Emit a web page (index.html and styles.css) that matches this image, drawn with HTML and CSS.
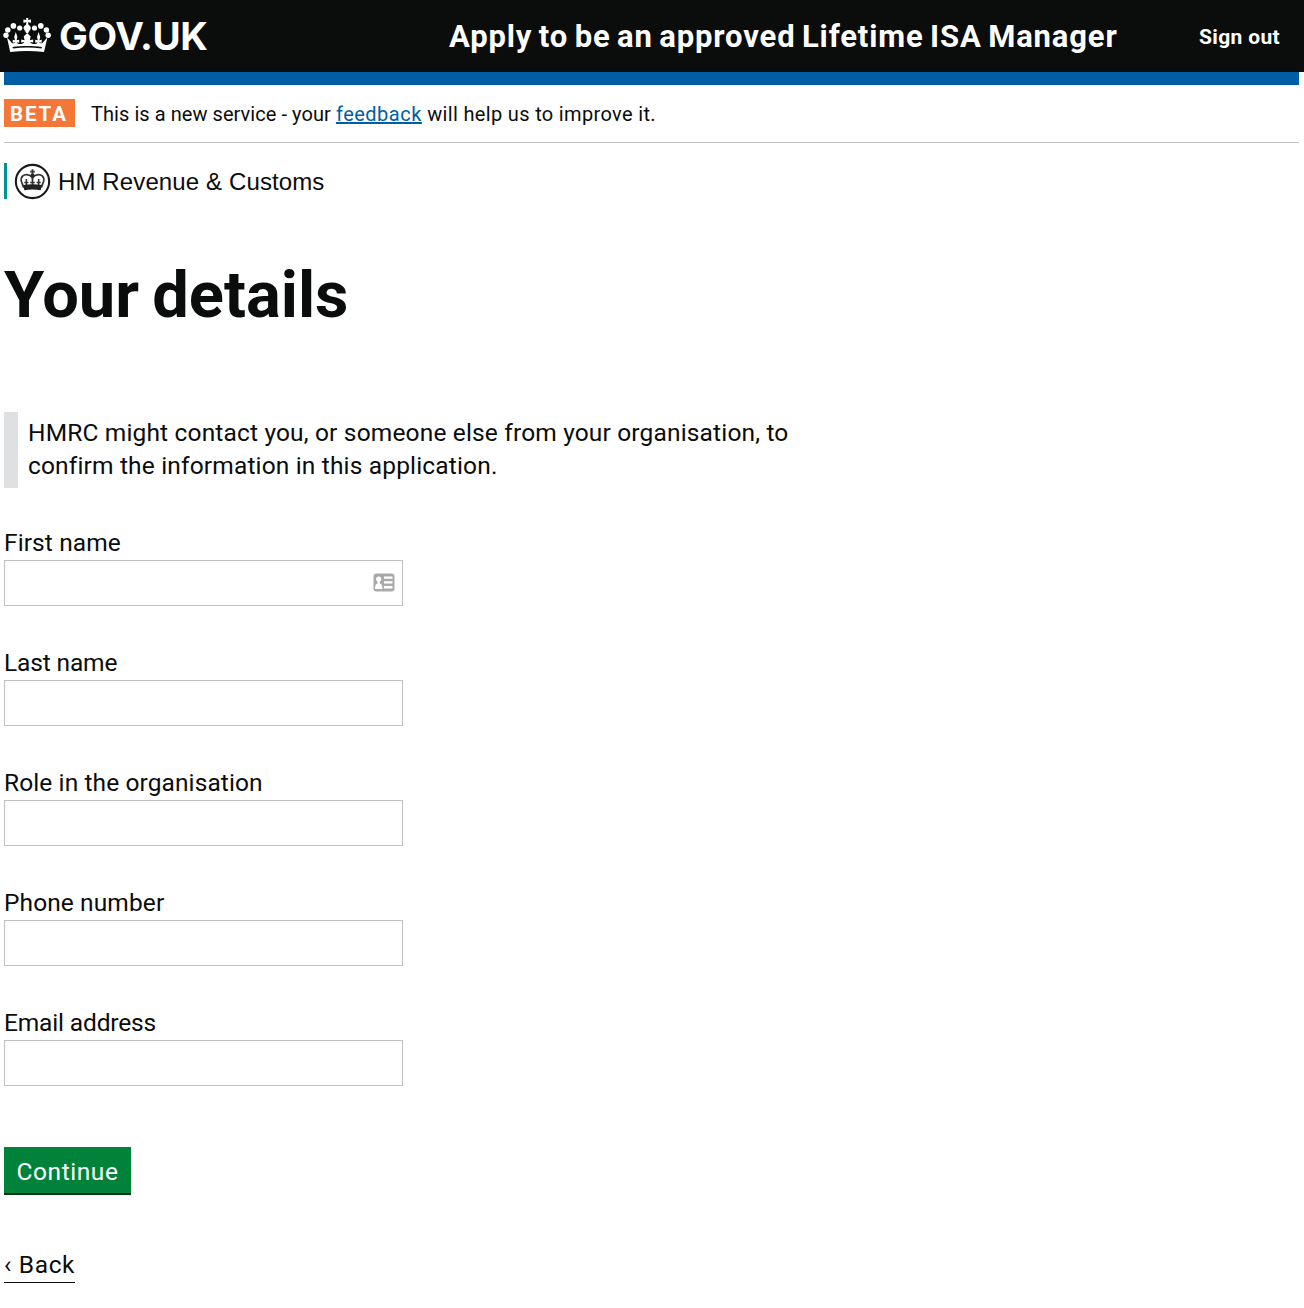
FILE: index.html
```html
<!DOCTYPE html>
<html lang="en">
<head>
<meta charset="utf-8">
<title>Your details</title>
<link rel="stylesheet" href="styles.css">
</head>
<body>
<header class="header">
  <a class="logo" href="#">
    <svg class="logo-crown" viewBox="0 0 48 36" fill="#fff">
      <circle cx="3" cy="17.300" r="2.700"/><circle cx="4.800" cy="12" r="2.700"/><circle cx="10.400" cy="7.900" r="2.800"/><circle cx="16.700" cy="10" r="2.600"/>
      <circle cx="45.200" cy="17.300" r="2.700"/><circle cx="43.400" cy="12" r="2.700"/><circle cx="37.800" cy="7.900" r="2.800"/><circle cx="31.500" cy="10" r="2.600"/>
      <path d="M22.800-.5h2.800L25 2l3-.5v3.300l-3-.5.5 2.700c1.500.5 2.300 1.800 2.300 3.500l-2.600 4.500h-2l-2.600-4.500c0-1.700.8-3 2.300-3.500l.5-2.700-3 .5V1.500l3 .5z"/>
      <path fill-rule="evenodd" d="M4 19.500l4 4.300c.8 2 3.700 2 4.200.4l-2.500.5v-3l2.300.6-.8-3.200L12.800 14l1.600 5.100-.8 3.200 2.600-.6v3l-2.500-.5c.7 2.600 6.700 2.400 7.500-.2l-3 .6v-3.200l3.400.8-.9-3.700 3.500-3.500 3.500 3.500-.9 3.700 3.400-.8v3.200l-3-.6c.8 2.600 6.800 2.800 7.500.2l-2.500.5v-3l2.600.6-.8-3.200L35.600 14l1.600 5.100-.8 3.200 2.300-.6v3l-2.500-.5c.5 1.600 3.400 1.600 4.200-.4l4-4.300L41 34c-11-1.500-22.800-1.500-33.800 0zM9.500 29l.5 1.500c9-1.200 19.400-1.200 28.400 0l.5-1.500c-9-1.300-20.400-1.300-29.400 0z"/>
    </svg>
    <span class="logo-text">GOV.UK</span>
  </a>
  <span class="service-name">Apply to be an approved Lifetime ISA Manager</span>
  <a class="sign-out" href="#">Sign out</a>
</header>
<main class="page">
  <div class="phase-banner">
    <strong class="phase-tag">BETA</strong>
    <span class="phase-text"><span class="phase-lead">This is a new service - your </span><a class="feedback" href="#">feedback</a> will help us to improve it.</span>
  </div>
  <div class="organisation">
    <svg class="crest" viewBox="0 0 36 36" fill="#222">
      <circle cx="18" cy="18" r="16.200" fill="#fff" stroke="#1a1a1a" stroke-width="2"/>
      <path d="M9.500 24L7.200 18C6 13 10 10.500 13.500 11.500c2.500.5 4.500 2 4.500 4.500 0-2.500 2-4 4.500-4.500 3.500-1 7.500 1.500 6.300 6.500l-2.300 6M18 6v17M15.800 8.500h4.400" fill="none" stroke="#333" stroke-width="1.700"/>
      <circle cx="18" cy="12" r="1.800"/>
      <path d="M12 15.500v7M24 15.500v7M10 19h4M22 19h4M15.800 19h4.400" fill="none" stroke="#333" stroke-width="1.500"/>
      <path d="M9 21.500c6-1 12-1 18 0l-1 5c-5-1-11-1-16 0z"/>
    </svg>
    <span class="organisation-name">HM Revenue &amp; Customs</span>
  </div>
  <h1 class="title">Your details</h1>
  <p class="inset">HMRC might contact you, or someone else from your organisation, to<br>confirm the information in this application.</p>
  <form class="form">
    <div class="field">
      <label class="label" for="first">First name</label>
      <div class="control">
        <input class="input" id="first" type="text">
        <svg class="autofill" viewBox="0 0 22 19">
          <rect x=".5" y=".5" width="21" height="18" rx="3" fill="#a9a9a9"/>
          <circle cx="5.700" cy="6" r="2.600" fill="#fff"/>
          <path d="M4.600 8h2.200v2.500c1.800.5 2.700 1.800 2.700 5.500H2c0-3.700.8-5 2.600-5.500zM11 3.500h8.500v2.300H11zM11 8.300h8.500v2.300H11zM11 13.100h8.500v2.300H11z" fill="#fff"/>
        </svg>
      </div>
    </div>
    <div class="field">
      <label class="label label-tight" for="last">Last name</label>
      <input class="input" id="last" type="text">
    </div>
    <div class="field">
      <label class="label" for="role">Role in the organisation</label>
      <input class="input" id="role" type="text">
    </div>
    <div class="field">
      <label class="label" for="phone">Phone number</label>
      <input class="input" id="phone" type="text">
    </div>
    <div class="field">
      <label class="label label-tight" for="email">Email address</label>
      <input class="input" id="email" type="text">
    </div>
    <button class="button" type="button">Continue</button>
  </form>
  <a class="back" href="#">‹ Back</a>
</main>
</body>
</html>
```
FILE: styles.css
```css
* { box-sizing: border-box; }
body {
  margin: 0;
  background: #fff;
  color: #0b0c0c;
  font-family: Roboto, sans-serif;
  font-size: 24.500px;
}
a { color: inherit; text-decoration: none; }
.header {
  display: flex;
  align-items: center;
  height: 72px;
  padding-left: 3px;
  background: #0b0c0c;
  color: #fff;
  font-weight: 700;
  white-space: nowrap;
}
.logo { display: flex; align-items: center; gap: 8px; width: 446px; }
.logo-crown { width: 48px; height: 36px; }
.logo-text { font-family: Inter, sans-serif; font-size: 38.500px; letter-spacing: -.35px; }
.service-name { width: 750px; font-size: 31px; letter-spacing: .85px; word-spacing: -2px; }
.sign-out { padding-top: 2px; font-size: 21px; letter-spacing: .35px; }
.page { margin: 0 5px 0 4px; border-top: 13px solid #005ea5; }
.phase-banner {
  display: flex;
  align-items: center;
  gap: 16px;
  height: 58px;
  padding-bottom: 1px;
  border-bottom: 1px solid #bfc1c3;
  font-size: 20px;
  letter-spacing: .34px;
}
.phase-tag {
  width: 71px;
  height: 28px;
  padding-left: 6px;
  line-height: 30px;
  background: #f47738;
  color: #fff;
  font-size: 20.500px;
  letter-spacing: 1.900px;
}
.phase-text { padding-top: 2px; }
.phase-lead { letter-spacing: .06px; }
.feedback { color: #005ea5; text-decoration: underline; letter-spacing: .5px; }
.organisation {
  display: flex;
  align-items: center;
  height: 36px;
  margin-top: 20px;
  border-left: 3px solid #009390;
  padding-left: 7px;
  gap: 7px;
  font-family: "Liberation Sans", Arial, sans-serif;
  font-size: 24px;
  letter-spacing: .12px;
}
.organisation-name { padding-top: 2px; }
.crest { width: 37px; height: 37px; }
.title { margin: 58px 0 0; height: 80px; line-height: 76px; font-size: 65px; letter-spacing: 0; word-spacing: -3px; }
.inset {
  height: 76px;
  margin: 75px 0 0;
  border-left: 14px solid #dee0e2;
  padding: 4px 0 0 10px;
  line-height: 33px;
  letter-spacing: .16px;
  white-space: nowrap;
}
.form { margin-top: 37px; }
.field { height: 120px; }
.label { display: block; height: 35px; line-height: 35px; letter-spacing: .1px; }
.label-tight { letter-spacing: -.15px; }
.control { position: relative; width: 399px; }
.input { display: block; width: 399px; height: 46px; border: 1px solid #bfc1c3; background: #fff; }
.autofill { position: absolute; right: 8px; top: 13px; width: 22px; height: 19px; }
.button {
  display: block;
  width: 127px;
  height: 48px;
  margin-top: 22px;
  padding: 2px 0 0;
  border: 0;
  border-bottom: 2px solid #003618;
  background: #00823b;
  color: #fff;
  font: inherit;
  letter-spacing: .56px;
}
.back { display: block; width: 71px; height: 36px; margin-top: 52px; border-bottom: 1px solid #0b0c0c; line-height: 36px; letter-spacing: .65px; white-space: nowrap; }
```
